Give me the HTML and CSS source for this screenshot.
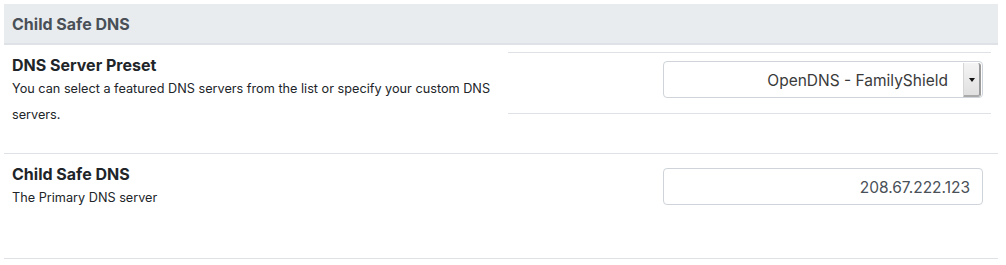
FILE: index.html
```html
<!DOCTYPE html>
<html>
<head>
<meta charset="utf-8">
<link rel="stylesheet" href="styles.css">
</head>
<body>
<div class="panel">
  <div class="panel-head">Child Safe DNS</div>
  <div class="row row-preset">
    <div class="label-cell">
      <div class="title">DNS Server Preset</div>
      <div class="desc">You can select a featured DNS servers from the list or specify your custom DNS servers.</div>
    </div>
    <div class="value-cell nested-wrap">
      <div class="nested">
        <div class="select">
          <span class="select-value">OpenDNS - FamilyShield</span>
          <span class="select-btn"><span class="tri"></span></span>
        </div>
      </div>
    </div>
  </div>
  <div class="row row-dns">
    <div class="label-cell">
      <div class="title">Child Safe DNS</div>
      <div class="desc">The Primary DNS server</div>
    </div>
    <div class="value-cell input-wrap">
      <div class="input">208.67.222.123</div>
    </div>
  </div>
</div>
</body>
</html>
```

FILE: styles.css
```css
html, body {
  margin: 0;
  padding: 0;
  background: #fff;
}
body {
  font-family: Inter, "Liberation Sans", sans-serif;
  color: #212529;
}
.panel {
  margin: 4px 0 0 4px;
  width: 994px;
}
.panel-head {
  height: 39px;
  background: #e9ecef;
  border-bottom: 2px solid #dee2e6;
  display: flex;
  align-items: center;
  padding-left: 8px;
  font-size: 16px;
  font-weight: 700;
  color: #495057;
}
.row {
  display: flex;
  border-bottom: 1px solid #dee2e6;
}
.row-preset {
  height: 108px;
}
.row-dns {
  height: 104px;
}
.label-cell {
  width: 488px;
  padding: 10px 8px 0 8px;
  flex: none;
}
.title {
  font-size: 16px;
  font-weight: 700;
  line-height: 20px;
}
.desc {
  font-size: 12.7px;
  line-height: 26px;
  margin-top: 1px;
}
.value-cell {
  flex: 1;
  display: flex;
  justify-content: flex-end;
  align-items: flex-start;
}
.nested-wrap {
  padding: 7px 7px 0 0;
}
.nested {
  flex: 1;
  border-top: 1px solid #dee2e6;
  border-bottom: 1px solid #dee2e6;
  padding: 8px 8px 15px 8px;
  display: flex;
  justify-content: flex-end;
}
.select {
  width: 318px;
  height: 35px;
  border: 1px solid #ced4da;
  border-radius: 4px;
  display: flex;
  align-items: stretch;
  overflow: hidden;
}
.select-value {
  flex: 1;
  display: flex;
  align-items: center;
  justify-content: flex-end;
  padding-right: 15px;
  padding-top: 2px;
  font-size: 15.5px;
  color: #3a3a3a;
}
.select-btn {
  width: 15px;
  margin: 1px 1px 0 0;
  background: linear-gradient(#f4f4f4, #e0e0e0);
  border-left: 1px solid #d6d6d6;
  border-right: 2px solid #9a9a9a;
  border-bottom: 2px solid #aaa;
  border-radius: 0 3px 3px 0;
  display: flex;
  align-items: center;
  justify-content: center;
}
.tri {
  width: 0;
  height: 0;
  border-left: 3px solid transparent;
  border-right: 3px solid transparent;
  border-top: 4px solid #111;
  margin-top: 1px;
}
.input-wrap {
  padding: 14px 15px 0 0;
}
.input {
  width: 306px;
  height: 33px;
  border: 1px solid #ced4da;
  border-radius: 4px;
  padding-right: 12px;
  padding-top: 2px;
  display: flex;
  align-items: center;
  justify-content: flex-end;
  font-size: 15.5px;
  color: #495057;
}
```
